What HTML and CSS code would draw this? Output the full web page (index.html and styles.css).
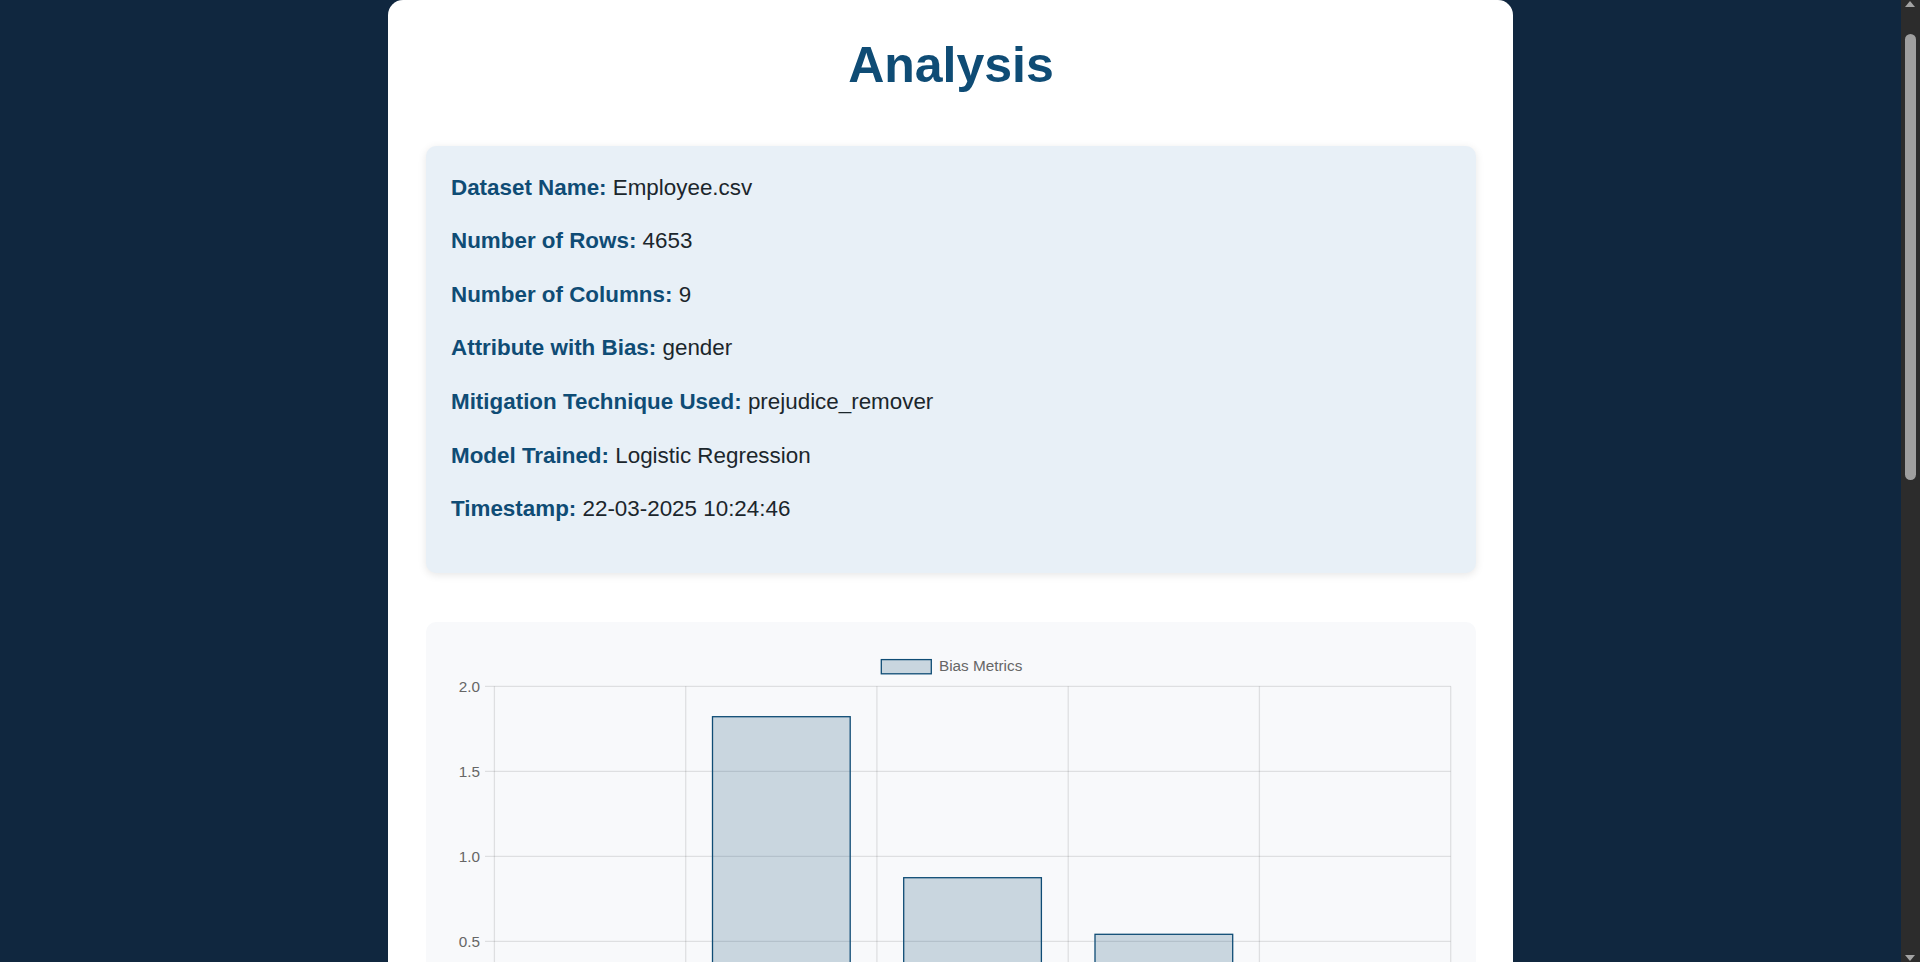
FILE: index.html
```html
<!DOCTYPE html>
<html lang="en">
<head>
<meta charset="utf-8">
<title>Analysis</title>
<link rel="stylesheet" href="styles.css">
</head>
<body>
<main class="card">
  <h1 class="title">Analysis</h1>
  <section class="info">
    <p><strong>Dataset Name:</strong> Employee.csv</p>
    <p><strong>Number of Rows:</strong> 4653</p>
    <p><strong>Number of Columns:</strong> 9</p>
    <p><strong>Attribute with Bias:</strong> gender</p>
    <p><strong>Mitigation Technique Used:</strong> prejudice_remover</p>
    <p><strong>Model Trained:</strong> Logistic Regression</p>
    <p><strong>Timestamp:</strong> 22-03-2025 10:24:46</p>
  </section>
  <section class="chart-box">
    <svg class="chart" viewBox="0 0 1050 470" width="1050" height="470" xmlns="http://www.w3.org/2000/svg">
      <g class="legend">
        <rect x="455.3" y="37.6" width="50" height="14.2" fill="rgba(15,76,117,0.2)" stroke="#0f4c75" stroke-width="1.3"/>
        <text x="513" y="49" class="lbl">Bias Metrics</text>
      </g>
      <g class="grid" stroke="rgba(0,0,0,0.1)" stroke-width="1.3">
        <line x1="59" y1="64.3" x2="1024.7" y2="64.3"/>
        <line x1="59" y1="149.3" x2="1024.7" y2="149.3"/>
        <line x1="59" y1="234.3" x2="1024.7" y2="234.3"/>
        <line x1="59" y1="319.3" x2="1024.7" y2="319.3"/>
        <line x1="59" y1="404.3" x2="1024.7" y2="404.3"/>
        <line x1="68.4" y1="64.3" x2="68.4" y2="412.5"/>
        <line x1="259.7" y1="64.3" x2="259.7" y2="412.5"/>
        <line x1="450.9" y1="64.3" x2="450.9" y2="412.5"/>
        <line x1="642.2" y1="64.3" x2="642.2" y2="412.5"/>
        <line x1="833.4" y1="64.3" x2="833.4" y2="412.5"/>
        <line x1="1024.7" y1="64.3" x2="1024.7" y2="412.5"/>
      </g>
      <g class="bars" fill="rgba(15,76,117,0.2)" stroke="#0f4c75" stroke-width="1.3">
        <rect x="95.2" y="370.3" width="137.7" height="34"/>
        <rect x="286.5" y="94.7" width="137.7" height="309.6"/>
        <rect x="477.7" y="255.7" width="137.7" height="148.6"/>
        <rect x="669" y="312.3" width="137.7" height="92"/>
        <rect x="860.2" y="387.3" width="137.7" height="17"/>
      </g>
      <g class="ylabels" text-anchor="end">
        <text x="54" y="69.5" class="lbl">2.0</text>
        <text x="54" y="154.5" class="lbl">1.5</text>
        <text x="54" y="239.5" class="lbl">1.0</text>
        <text x="54" y="324.5" class="lbl">0.5</text>
        <text x="54" y="409.5" class="lbl">0.0</text>
      </g>
      <g class="xlabels" text-anchor="middle">
        <text x="164" y="432" class="lbl">Statistical Parity Difference</text>
        <text x="355.3" y="432" class="lbl">Disparate Impact</text>
        <text x="546.6" y="432" class="lbl">Equal Opportunity Ratio</text>
        <text x="737.8" y="432" class="lbl">Average Odds Ratio</text>
        <text x="929.1" y="432" class="lbl">Theil Index</text>
      </g>
    </svg>
  </section>
</main>
<div class="scrollbar" aria-hidden="true">
  <span class="sb-arrow sb-up"></span>
  <span class="sb-thumb"></span>
  <span class="sb-arrow sb-down"></span>
</div>
</body>
</html>
```
FILE: styles.css
```css
html {
  background: #10273f;
}

body {
  margin: 0;
  padding-right: 19px;
  background: #10273f;
  font-family: "Liberation Sans", Arial, sans-serif;
}

.card {
  box-sizing: border-box;
  width: 1125px;
  min-height: 1990px;
  margin: 0 auto;
  padding: 20px 37px 40px 38px;
  background: #ffffff;
  border-radius: 15px;
}

.title {
  margin: 16px 0 51.5px;
  text-align: center;
  color: #0f4c75;
  font-size: 50px;
  font-weight: 700;
  line-height: normal;
}

.info {
  padding: 25px 25px 27px;
  background: #e8f0f7;
  border-radius: 10px;
  box-shadow: 0 2px 8px rgba(0, 0, 0, 0.1);
}

.info p {
  margin: 0 0 20px;
  font-size: 22.4px;
  line-height: 1.5;
  color: #1b262c;
}

.info strong {
  color: #0f4c75;
  font-weight: 700;
}

.chart-box {
  margin-top: 49px;
  background: #f8f9fb;
  border-radius: 10px;
}

.chart {
  display: block;
  width: 1050px;
  height: 470px;
}

.lbl {
  font-family: "Liberation Sans", Arial, sans-serif;
  font-size: 15.3px;
  fill: #666666;
}

/* emulated browser scrollbar overlay */
.scrollbar {
  position: fixed;
  top: 0;
  right: 0;
  width: 19px;
  height: 100vh;
  background: #2c2c2c;
}

.sb-thumb {
  position: absolute;
  left: 4px;
  top: 34px;
  width: 11px;
  height: 446px;
  background: #9f9f9f;
  border-radius: 6px;
}

.sb-arrow {
  position: absolute;
  left: 4px;
  width: 0;
  height: 0;
  border-left: 5.5px solid transparent;
  border-right: 5.5px solid transparent;
}

.sb-up {
  top: 1px;
  border-bottom: 6px solid #a3a3a3;
}

.sb-down {
  bottom: 1px;
  border-top: 6px solid #a3a3a3;
}
```
